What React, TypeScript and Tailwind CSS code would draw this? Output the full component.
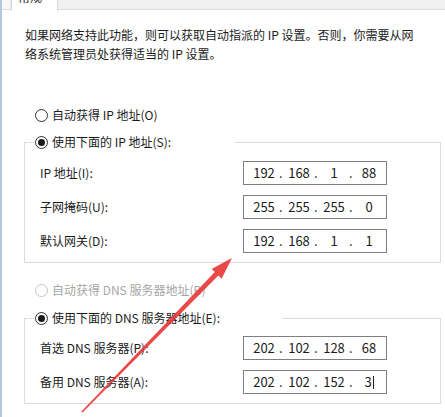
import React from 'react';

const FONT = { fontFamily: '"Noto Sans CJK SC", "Noto Sans", sans-serif' };

function Radio({ checked, disabled, label }: { checked?: boolean; disabled?: boolean; label: string }) {
  return (
    <span className={`flex items-center gap-[4px] h-[20px] leading-[20px] text-[12px] ${disabled ? 'text-[#a6a6a6]' : 'text-[#1b1b1b]'}`}>
      <span
        className={`flex h-[13px] w-[13px] items-center justify-center rounded-full border bg-white ${disabled ? 'border-[#c4c4c4]' : 'border-[#333333]'}`}
      >
        {checked && <span className="h-[7px] w-[7px] rounded-full bg-[#1b1b1b]" />}
      </span>
      <span className="whitespace-nowrap">{label}</span>
    </span>
  );
}

function IpBox({ parts, caret }: { parts: string[]; caret?: boolean }) {
  return (
    <div className="flex h-[24px] w-[144px] items-center border border-[#7f7f7f] bg-white pl-[5px] text-[13px] leading-[22px] text-[#1b1b1b]">
      {parts.map((p, i) => (
        <React.Fragment key={i}>
          <span className="flex w-[30px] items-center justify-center">
            {p}
            {caret && i === 3 && <span className="ml-[1px] h-[13px] w-px bg-[#1b1b1b]" />}
          </span>
          {i < 3 && <span className="w-[5px] text-left">.</span>}
        </React.Fragment>
      ))}
    </div>
  );
}

function Row({ label, parts, caret }: { label: string; parts: string[]; caret?: boolean }) {
  return (
    <div className="grid grid-cols-[203px_144px] items-center">
      <span className="whitespace-nowrap text-[12px] leading-[20px] text-[#1b1b1b]">{label}</span>
      <IpBox parts={parts} caret={caret} />
    </div>
  );
}

export default function App() {
  return (
    <div className="relative h-[417px] w-[445px] overflow-hidden border-l-2 border-[#b3c8dd] bg-white" style={FONT}>
      {/* tab strip */}
      <div className="flex h-[10px] border-b border-[#dcdcdc] bg-[#f0f0f0]">
        <div className="w-[9px] border-r border-[#e6e6e6] bg-[#f7f7f7]" />
        <div className="-mb-px h-[11px] w-[47px] overflow-hidden border-x border-[#d9d9d9] bg-white pl-[6px]">
          <span className="-mt-[9px] block text-[12px] leading-[12px] text-[#1b1b1b]">常规</span>
        </div>
      </div>

      {/* description */}
      <div className="mt-[15px] pl-[23px] text-[12px] leading-[19px] text-[#1b1b1b]">
        <p className="whitespace-nowrap">如果网络支持此功能，则可以获取自动指派的 IP 设置。否则，你需要从网</p>
        <p className="whitespace-nowrap">络系统管理员处获得适当的 IP 设置。</p>
      </div>

      <div className="mt-[42px] pl-[33px]">
        <Radio label="自动获得 IP 地址(O)" />
      </div>

      <fieldset className="ml-[22px] mt-[7px] w-[417px] border border-[#dcdcdc] pb-[9px] pl-[15px]">
        <legend className="-ml-[6px] w-[201px] bg-white pl-[1px]">
          <Radio checked label="使用下面的 IP 地址(S):" />
        </legend>
        <div className="mt-[9px] flex flex-col gap-[10px]">
          <Row label="IP 地址(I):" parts={['192', '168', '1', '88']} />
          <Row label="子网掩码(U):" parts={['255', '255', '255', '0']} />
          <Row label="默认网关(D):" parts={['192', '168', '1', '1']} />
        </div>
      </fieldset>

      <div className="mt-[17px] pl-[33px]">
        <Radio disabled label="自动获得 DNS 服务器地址(B)" />
      </div>

      <fieldset className="ml-[22px] mt-[8px] w-[417px] border border-[#dcdcdc] pb-[9px] pl-[15px]">
        <legend className="-ml-[6px] w-[248px] bg-white pl-[1px]">
          <Radio checked label="使用下面的 DNS 服务器地址(E):" />
        </legend>
        <div className="mt-[8px] flex flex-col gap-[10px]">
          <Row label="首选 DNS 服务器(P):" parts={['202', '102', '128', '68']} />
          <Row label="备用 DNS 服务器(A):" parts={['202', '102', '152', '3']} caret />
        </div>
      </fieldset>

      {/* red annotation arrow */}
      <svg className="pointer-events-none absolute left-[-2px] top-0" width="445" height="417" viewBox="0 0 445 417">
        <polygon
          points="232,258 221.6,278.7 218.4,275.5 82.6,412.4 81.4,411.6 214.8,272.1 211.6,268.9"
          fill="#e8393a"
          opacity="0.92"
        />
      </svg>
    </div>
  );
}
